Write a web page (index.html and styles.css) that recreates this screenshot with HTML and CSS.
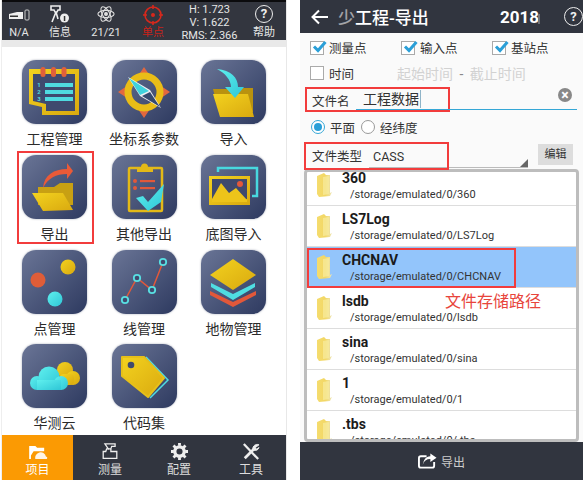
FILE: index.html
```html
<!DOCTYPE html>
<html lang="en">
<head>
<meta charset="UTF-8">
<meta name="viewport" content="width=device-width, initial-scale=1.0">
<title>工程-导出</title>
<link rel="stylesheet" href="styles.css">
</head>
<body>
<svg class="defs" width="0" height="0">
    <defs>
        <linearGradient id="gold" x1="0" y1="0" x2="1" y2="1"><stop offset="0" stop-color="#f3d21f"/><stop offset="1" stop-color="#d9a90f"/></linearGradient>
        <linearGradient id="cyan" x1="0" y1="0" x2="1" y2="1"><stop offset="0" stop-color="#5ff0ee"/><stop offset="1" stop-color="#2fc6d6"/></linearGradient>
        <linearGradient id="folder" x1="0" y1="0" x2="1" y2="0"><stop offset="0" stop-color="#f5dc6e"/><stop offset="0.55" stop-color="#f2d765"/><stop offset="1" stop-color="#eee6b8"/></linearGradient>
        <symbol id="small-folder" viewBox="0 0 18 26">
            <path d="M2 4 L9 1 L11 3 L15 3 L15 21 L17 20 L15 24 L4 25 L2 22 Z" fill="url(#folder)"/>
            <path d="M8 5 L14 4 L14 22 L8 23 Z" fill="#f8ec9f" opacity="0.7"/>
        </symbol>
    </defs>
</svg>

<div class="phone phone-left">
    <div class="status-bar">
        <div class="status-item">
            <svg class="status-icon" width="22" height="14" viewBox="0 0 22 14"><path d="M1 5 L9 3 L15 3 L15 10 L1 10 Z" fill="#eee"/><rect x="17" y="1" width="4" height="10" rx="1" fill="none" stroke="#ccc"/><rect x="2" y="6.5" width="8" height="1.5" fill="#333"/></svg>
            <span>N/A</span>
        </div>
        <div class="status-item">
            <svg class="status-icon" width="20" height="18" viewBox="0 0 20 18"><path d="M1 1 H10 V5 H8 L7 7 H5 L4 5 H1 Z" fill="none" stroke="#eee" stroke-width="1.6"/><path d="M6 7 L2 17 M6 7 L8 14" stroke="#eee" stroke-width="1.6"/><circle cx="14.5" cy="13" r="4.5" fill="#eee"/><rect x="13.8" y="11" width="1.5" height="5" fill="#333"/></svg>
            <span>信息</span>
        </div>
        <div class="status-item">
            <svg class="status-icon" width="18" height="18" viewBox="0 0 20 20" fill="none" stroke="#ddd" stroke-width="1.2"><ellipse cx="10" cy="10" rx="9" ry="4"/><ellipse cx="10" cy="10" rx="9" ry="4" transform="rotate(60 10 10)"/><ellipse cx="10" cy="10" rx="9" ry="4" transform="rotate(120 10 10)"/><circle cx="10" cy="10" r="1.6" fill="#ddd"/></svg>
            <span>21/21</span>
        </div>
        <div class="status-item status-red">
            <svg class="status-icon" width="20" height="20" viewBox="0 0 20 20" fill="none" stroke="#d8281c" stroke-width="1.6"><circle cx="10" cy="10" r="8"/><circle cx="10" cy="10" r="1.2" fill="#d8281c"/><path d="M10 0 V4 M10 16 V20 M0 10 H4 M16 10 H20"/></svg>
            <span>单点</span>
        </div>
        <div class="status-values">
            <span>H: 1.723</span>
            <span>V: 1.622</span>
            <span>RMS: 2.366</span>
        </div>
        <div class="status-item status-help">
            <div class="help-ring">?</div>
            <span>帮助</span>
        </div>
    </div>
    <div class="status-shade"></div>

    <div class="menu-grid">
        <div class="menu-item">
            <div class="tile">
                <svg width="65" height="64" viewBox="0 0 65 64">
                    <path d="M7 9 H57 V55 H20 V47 L7 44 Z" fill="url(#gold)"/>
                    <path d="M11 14 H53 V51 H24 V44 L11 41 Z" fill="#3f4a6e"/>
                    <rect x="18.5" y="7" width="5" height="10" rx="2.5" fill="#e0603a"/>
                    <rect x="29" y="7" width="5" height="10" rx="2.5" fill="#e0603a"/>
                    <rect x="39.5" y="7" width="5" height="10" rx="2.5" fill="#e0603a"/>
                    <rect x="23" y="23" width="28" height="4" fill="#4fdbe0"/>
                    <rect x="23" y="30" width="28" height="4" fill="#4fdbe0"/>
                    <rect x="23" y="37" width="28" height="4" fill="#4fdbe0"/>
                    <text x="17" y="27" class="tile-num">1</text>
                    <text x="17" y="34" class="tile-num">2</text>
                    <text x="17" y="41" class="tile-num">3</text>
                </svg>
            </div>
            <div class="menu-label">工程管理</div>
        </div>
        <div class="menu-item">
            <div class="tile">
                <svg width="65" height="64" viewBox="0 0 65 64">
                    <path d="M32 7 L40 19 H24 Z M58 32 L46 40 V24 Z M32 58 L24 46 H40 Z M6 32 L18 24 V40 Z" fill="#e2683f"/>
                    <circle cx="32" cy="32" r="16" fill="none" stroke="#e9bd17" stroke-width="7"/>
                    <path d="M16 17 L38 30 L49 48 L28 36 Z" fill="#fff" opacity="0.9"/>
                    <path d="M17 18 L37 31 L28 35 Z" fill="#3fd2dd"/>
                    <path d="M30 36 L38 32 L48 47 Z" fill="#35496f"/>
                </svg>
            </div>
            <div class="menu-label">坐标系参数</div>
        </div>
        <div class="menu-item">
            <div class="tile">
                <svg width="65" height="64" viewBox="0 0 65 64">
                    <path d="M12 29 H39 L41 28 H52 V52 H18 Z" fill="#b9920f"/>
                    <path d="M12 34 H47 L53 57 H19 Z" fill="url(#gold)"/>
                    <path d="M16 9 C30 10 37 18 37 27 L43 27 L34 38 L24 27 L30 27 C30 20 24 13 16 9 Z" fill="url(#cyan)"/>
                </svg>
            </div>
            <div class="menu-label">导入</div>
        </div>

        <div class="menu-item marked">
            <div class="tile">
                <svg width="65" height="64" viewBox="0 0 65 64">
                    <path d="M16 32 H32 L38 28 H51 V50 H16 Z" fill="#c8a013"/>
                    <path d="M10 38 H41 L51 55 L21 56 Z" fill="url(#gold)"/>
                    <path d="M21 33 C22 20 32 14 45 14 L45 8 L51 16 L45 24 L45 19 C34 19 26 23 21 33 Z" fill="#ea5a38"/>
                </svg>
            </div>
            <div class="menu-label">导出</div>
        </div>
        <div class="menu-item">
            <div class="tile">
                <svg width="65" height="64" viewBox="0 0 65 64">
                    <rect x="17" y="13" width="33" height="43" rx="1" fill="none" stroke="#e3b917" stroke-width="2.5"/>
                    <path d="M25 12 H29 A3.5 3.5 0 0 1 36 12 H41 V17 H25 Z" fill="#e3b917"/>
                    <circle cx="23" cy="26" r="2" fill="#e2583a"/>
                    <rect x="28" y="25" width="15" height="2.2" fill="#e2583a"/>
                    <circle cx="23" cy="33" r="2" fill="#e2583a"/>
                    <rect x="28" y="32" width="15" height="2.2" fill="#e2583a"/>
                    <path d="M24 43 L31 41 L36 47 L52 29 L49 47 L36 56 Z" fill="url(#cyan)"/>
                </svg>
            </div>
            <div class="menu-label">其他导出</div>
        </div>
        <div class="menu-item">
            <div class="tile">
                <svg width="65" height="64" viewBox="0 0 65 64">
                    <path d="M17 17 V13 H56 V41 H51" fill="none" stroke="#48d8df" stroke-width="2.5"/>
                    <rect x="8" y="21" width="41" height="29" fill="url(#gold)"/>
                    <rect x="11" y="24" width="35" height="20" fill="#3f4a6e"/>
                    <path d="M11 44 L20 28 L28 38 L35 33 L46 45 V47 H11 Z" fill="#edc41a"/>
                    <circle cx="39" cy="29" r="3" fill="#e2583a"/>
                </svg>
            </div>
            <div class="menu-label">底图导入</div>
        </div>

        <div class="menu-item">
            <div class="tile">
                <svg width="65" height="64" viewBox="0 0 65 64">
                    <circle cx="46" cy="17" r="7.5" fill="url(#gold)"/>
                    <circle cx="16" cy="30" r="7.5" fill="#df5d38"/>
                    <circle cx="33" cy="49" r="7.5" fill="url(#cyan)"/>
                </svg>
            </div>
            <div class="menu-label">点管理</div>
        </div>
        <div class="menu-item">
            <div class="tile">
                <svg width="65" height="64" viewBox="0 0 65 64">
                    <path d="M13 50 L25 28 L40 40 L51 12" fill="none" stroke="#e2583a" stroke-width="1.5"/>
                    <g fill="#3f4a6e" stroke="#58dfe2" stroke-width="1.8"><circle cx="13" cy="50" r="3.2"/><circle cx="25" cy="28" r="3.2"/><circle cx="40" cy="40" r="3.2"/><circle cx="51" cy="12" r="3.2"/></g>
                </svg>
            </div>
            <div class="menu-label">线管理</div>
        </div>
        <div class="menu-item">
            <div class="tile">
                <svg width="65" height="64" viewBox="0 0 65 64">
                    <path d="M9 41 L32 52 L55 41 L55 45 L32 57 L9 45 Z" fill="#e2583a"/>
                    <path d="M10 33 L32 44 L54 33 L54 37 L32 50 L10 37 Z" fill="#4fdde2"/>
                    <path d="M32 9 L55 25 L32 40 L9 25 Z" fill="url(#gold)"/>
                </svg>
            </div>
            <div class="menu-label">地物管理</div>
        </div>

        <div class="menu-item">
            <div class="tile">
                <svg width="65" height="64" viewBox="0 0 65 64">
                    <g fill="url(#gold)"><circle cx="43" cy="26" r="8"/><circle cx="51" cy="34" r="7"/><rect x="38" y="30" width="14" height="11" rx="4"/></g>
                    <g fill="url(#cyan)"><circle cx="15" cy="39" r="7"/><circle cx="27" cy="33" r="10.5"/><circle cx="39" cy="39" r="7"/><rect x="15" y="36" width="24" height="10"/></g>
                </svg>
            </div>
            <div class="menu-label">华测云</div>
        </div>
        <div class="menu-item">
            <div class="tile">
                <svg width="65" height="64" viewBox="0 0 65 64">
                    <path d="M34 13 L56 36 L38 54" fill="none" stroke="#4fdde2" stroke-width="1.5"/>
                    <path d="M10 13 H32 L52 34 L36 53 L10 32 Z" fill="url(#gold)" stroke="#e6c019" stroke-width="2" stroke-linejoin="round"/>
                    <circle cx="19" cy="21" r="3.3" fill="#3f4a6e"/>
                </svg>
            </div>
            <div class="menu-label">代码集</div>
        </div>
    </div>

    <div class="bottom-nav">
        <div class="nav-item nav-active">
            <svg width="20" height="15" viewBox="0 0 22 17"><path d="M1 1 H8 L10 3 H18 V7 H6 L3 12 V16 H1 Z" fill="#fff"/><path d="M8 16 A6 6 0 0 1 20 13 A2 2 0 0 1 21 16 Z" fill="#fff" opacity="0.9"/></svg>
            <span>项目</span>
        </div>
        <div class="nav-item">
            <svg width="18" height="17" viewBox="0 0 20 20" fill="none" stroke="#eee" stroke-width="1.5"><path d="M4 1 H16 V4 H12 L11 7 H8 Z"/><path d="M9 7 H6 L5 10 H2 V18 H18 V10 H11 V7"/></svg>
            <span>测量</span>
        </div>
        <div class="nav-item">
            <svg width="17" height="17" viewBox="0 0 18 18"><circle cx="9" cy="9" r="5" fill="none" stroke="#eee" stroke-width="3.5"/><path d="M7.5 0 H10.5 V3 H7.5 Z M7.5 15 H10.5 V18 H7.5 Z M0 7.5 H3 V10.5 H0 Z M15 7.5 H18 V10.5 H15 Z" fill="#eee"/><path d="M7.5 0 H10.5 V3 H7.5 Z M7.5 15 H10.5 V18 H7.5 Z M0 7.5 H3 V10.5 H0 Z M15 7.5 H18 V10.5 H15 Z" fill="#eee" transform="rotate(45 9 9)"/></svg>
            <span>配置</span>
        </div>
        <div class="nav-item">
            <svg width="18" height="17" viewBox="0 0 20 19" fill="none" stroke="#eee"><path d="M2 1 L18 18" stroke-width="2.5"/><path d="M3 17 L13 7" stroke-width="3"/><path d="M12 7 A5 5 0 0 1 19 2 L15 5 L16 7 L19 5 A5 5 0 0 1 13 8" fill="#eee" stroke-width="1"/></svg>
            <span>工具</span>
        </div>
    </div>
</div>

<div class="phone phone-right">
    <div class="title-bar">
        <svg class="back-arrow" width="18" height="16" viewBox="0 0 18 16" fill="none" stroke="#fff" stroke-width="2"><path d="M17 8 H2 M8 1.5 L1.5 8 L8 14.5"/></svg>
        <div class="title-text"><span class="title-fade">少</span>工程-导出</div>
        <div class="title-date">2018</div>
        <div class="help-ring help-title">?</div>
    </div>

    <div class="check-row">
        <label class="check-item"><span class="box box-on"><svg width="15" height="13" viewBox="0 0 15 13" fill="none" stroke="#2a9fd8" stroke-width="3"><path d="M2 6.5 L6 10.5 L13.5 2"/></svg></span>测量点</label>
        <label class="check-item"><span class="box box-on"><svg width="15" height="13" viewBox="0 0 15 13" fill="none" stroke="#2a9fd8" stroke-width="3"><path d="M2 6.5 L6 10.5 L13.5 2"/></svg></span>输入点</label>
        <label class="check-item"><span class="box box-on"><svg width="15" height="13" viewBox="0 0 15 13" fill="none" stroke="#2a9fd8" stroke-width="3"><path d="M2 6.5 L6 10.5 L13.5 2"/></svg></span>基站点</label>
    </div>

    <div class="time-row">
        <label class="check-item time-check"><span class="box"></span>时间</label>
        <div class="time-range">起始时间 <span class="time-dash">-</span> 截止时间</div>
    </div>

    <div class="name-row">
        <div class="field-label name-label">文件名</div>
        <div class="name-input">工程数据</div>
        <div class="clear-btn">×</div>
        <div class="red-box name-box"></div>
    </div>

    <div class="radio-row">
        <span class="radio radio-on"></span><span class="radio-text">平面</span>
        <span class="radio"></span><span>经纬度</span>
    </div>

    <div class="type-row">
        <div class="field-label">文件类型</div>
        <div class="type-select">CASS</div>
        <div class="edit-btn">编辑</div>
        <div class="red-box type-box"></div>
    </div>

    <div class="file-list">
        <div class="file-rows">
            <div class="file-row">
                <svg class="file-folder" width="18" height="26"><use href="#small-folder"/></svg>
                <div class="file-text"><div class="file-name">360</div><div class="file-path">/storage/emulated/0/360</div></div>
            </div>
            <div class="file-row">
                <svg class="file-folder" width="18" height="26"><use href="#small-folder"/></svg>
                <div class="file-text"><div class="file-name">LS7Log</div><div class="file-path">/storage/emulated/0/LS7Log</div></div>
            </div>
            <div class="file-row file-selected">
                <svg class="file-folder" width="18" height="26"><use href="#small-folder"/></svg>
                <div class="file-text"><div class="file-name">CHCNAV</div><div class="file-path">/storage/emulated/0/CHCNAV</div></div>
                <div class="red-box chcnav-box"></div>
            </div>
            <div class="file-row">
                <svg class="file-folder" width="18" height="26"><use href="#small-folder"/></svg>
                <div class="file-text"><div class="file-name">lsdb</div><div class="file-path">/storage/emulated/0/lsdb</div></div>
                <div class="path-note">文件存储路径</div>
            </div>
            <div class="file-row">
                <svg class="file-folder" width="18" height="26"><use href="#small-folder"/></svg>
                <div class="file-text"><div class="file-name">sina</div><div class="file-path">/storage/emulated/0/sina</div></div>
            </div>
            <div class="file-row">
                <svg class="file-folder" width="18" height="26"><use href="#small-folder"/></svg>
                <div class="file-text"><div class="file-name">1</div><div class="file-path">/storage/emulated/0/1</div></div>
            </div>
            <div class="file-row">
                <svg class="file-folder" width="18" height="26"><use href="#small-folder"/></svg>
                <div class="file-text"><div class="file-name">.tbs</div><div class="file-path">/storage/emulated/0/.tbs</div></div>
            </div>
        </div>
    </div>

    <div class="export-bar">
        <svg width="19" height="16" viewBox="0 0 20 16" fill="none" stroke="#fff" stroke-width="2"><path d="M9 3 H3 Q1 3 1 5 V13 Q1 15 3 15 H15 Q17 15 17 13 V9"/><path d="M5 12 C6 8 9 6 13 6 V9 L19.5 4.5 L13 0 V3 C8 3 6 7 5 12 Z" fill="#fff" stroke="none"/></svg>
        <span>导出</span>
    </div>
</div>
</body>
</html>
```

FILE: styles.css
```css
html, body {
    margin: 0;
    padding: 0;
    background-color: white;
}

body {
    display: flex;
    align-items: flex-start;
    width: 584px;
    height: 485px;
    overflow: hidden;
    font-family: "Roboto", "Noto Sans CJK SC", sans-serif;
}

.defs {
    position: absolute;
}

.phone {
    height: 480px;
    display: flex;
    flex-direction: column;
    flex-shrink: 0;
}

.phone-left {
    width: 286px;
    margin-left: 1px;
    border-left: 1px solid #eee;
    border-right: 1px solid #e8e8e8;
    box-sizing: border-box;
}

.phone-right {
    width: 283px;
    margin-left: 13px;
    background-color: #fafafa;
}

/* left screen */
.status-bar {
    height: 40px;
    box-sizing: border-box;
    background-color: #33363f;
    border-top: 2px solid #0b0b0d;
    display: flex;
    color: #e6e6e6;
    font-size: 11px;
}

.status-item {
    display: flex;
    flex-direction: column;
    align-items: center;
    justify-content: space-between;
    height: 38px;
    padding: 3px 0 0;
    box-sizing: border-box;
    line-height: 14px;
}

.status-item:nth-child(1) {
    width: 30px;
    margin-left: 2px;
    padding-top: 7px;
}

.status-item:nth-child(2) {
    width: 52px;
}

.status-item:nth-child(3) {
    width: 40px;
}

.status-item:nth-child(4) {
    width: 54px;
}

.status-icon {
    display: block;
}

.status-red {
    color: #c9231a;
}

.status-values {
    width: 59px;
    line-height: 13px;
    text-align: center;
    white-space: nowrap;
    display: flex;
    flex-direction: column;
    padding-top: 1px;
}

.status-item.status-help {
    width: 40px;
    margin-left: 5px;
}

.help-ring {
    width: 16px;
    height: 16px;
    border: 1px solid #eee;
    border-radius: 50%;
    text-align: center;
    font-size: 13px;
    font-weight: bold;
    line-height: 16px;
    color: #eee;
}

.status-shade {
    height: 7px;
    background-color: #e9e9e9;
}

.menu-grid {
    flex: 1;
    display: grid;
    grid-template-columns: repeat(3, 89.5px);
    grid-auto-rows: 94.8px;
    padding: 13px 0 0 20px;
    background-color: white;
    overflow: hidden;
}

.menu-item {
    position: relative;
    width: 65px;
}

.marked::after {
    content: "";
    position: absolute;
    left: -5px;
    top: -4px;
    width: 77px;
    height: 93px;
    box-sizing: border-box;
    border: 2px solid #f23c3c;
}

.tile {
    width: 65px;
    height: 64px;
    border-radius: 14px;
    background: linear-gradient(135deg, #6a7596, #2e3a60);
    box-shadow: 0 0 2px rgba(60, 70, 100, 0.5);
}

.tile svg {
    display: block;
}

.tile-num {
    font-size: 6px;
    font-weight: bold;
    fill: #4fdbe0;
    text-anchor: middle;
}

.menu-label {
    width: 100px;
    margin-left: -17.5px;
    margin-top: 6px;
    text-align: center;
    font-size: 14px;
    line-height: 18px;
    color: #2b2b2b;
}

.bottom-nav {
    height: 45px;
    background-color: #31353f;
    display: flex;
    color: #ddd;
    font-size: 12px;
}

.nav-item {
    width: 64px;
    display: flex;
    flex-direction: column;
    align-items: center;
    justify-content: flex-end;
    gap: 2px;
    line-height: 16px;
    padding-bottom: 2px;
    box-sizing: border-box;
}

.nav-item:nth-child(2) {
    width: 74px;
}

.nav-item:nth-child(4) {
    width: 70px;
    margin-left: 5px;
}

.nav-item.nav-active {
    width: 71px;
    background-color: #fb9a03;
    color: white;
}

/* right screen */
.title-bar {
    height: 33px;
    background-color: #31353f;
    display: flex;
    align-items: center;
    color: white;
}

.back-arrow {
    margin-left: 11px;
}

.title-text {
    margin-left: 9px;
    width: 162px;
    font-size: 17px;
    font-weight: 500;
}

.title-fade {
    opacity: 0.55;
}

.title-date {
    position: relative;
    font-size: 17px;
    font-weight: bold;
    width: 55px;
    margin-right: 9px;
}

.title-date::after {
    content: "";
    position: absolute;
    left: 38px;
    top: 7px;
    width: 2px;
    height: 10px;
    background-color: #6e7178;
}

.help-title {
    width: 17px;
    height: 17px;
    line-height: 17px;
}

.check-row {
    height: 27px;
    margin-top: 1px;
    padding-left: 10px;
    display: flex;
    align-items: center;
    font-size: 12.5px;
    color: #333;
}

.check-item {
    display: flex;
    align-items: center;
    gap: 5px;
    width: 92px;
}

.box {
    position: relative;
    display: block;
    width: 12px;
    height: 12px;
    border: 1px solid #aaa;
    background-color: white;
    flex-shrink: 0;
}

.box svg {
    position: absolute;
    left: 1px;
    top: -2px;
}

.time-row {
    height: 24px;
    padding-left: 10px;
    display: flex;
    align-items: center;
    font-size: 12.5px;
    color: #333;
}

.time-check {
    width: 87px;
}

.time-range {
    font-size: 14px;
    color: #d2d2d2;
}

.time-dash {
    color: #888;
    margin: 0 3px;
}

.name-row {
    position: relative;
    height: 27px;
    display: flex;
    align-items: center;
    padding-left: 12px;
}

.field-label {
    font-size: 12.5px;
    color: #333;
}

.name-label {
    width: 51px;
    margin-top: 3px;
}

.name-input {
    font-size: 14px;
    color: #333;
    line-height: 18px;
    padding-right: 1px;
    border-right: 1px solid #8fb4c8;
}

.name-row::after {
    content: "";
    position: absolute;
    left: 56px;
    top: 24px;
    width: 221px;
    height: 1px;
    background-color: #35a7d6;
}

.clear-btn {
    position: absolute;
    left: 258px;
    top: 3px;
    width: 14px;
    height: 14px;
    border-radius: 50%;
    background-color: #888;
    color: white;
    font-size: 14px;
    font-weight: bold;
    line-height: 14px;
    text-align: center;
}

.red-box {
    position: absolute;
    border: 2px solid #f23c3c;
    box-sizing: border-box;
}

.name-box {
    left: 5px;
    top: 2px;
    width: 145px;
    height: 25px;
}

.radio-row {
    height: 30px;
    padding-left: 11px;
    display: flex;
    align-items: center;
    font-size: 12.5px;
    color: #333;
}

.radio {
    position: relative;
    display: block;
    width: 12px;
    height: 12px;
    border: 1px solid #999;
    border-radius: 50%;
    margin-right: 5px;
    background-color: white;
}

.radio-on {
    border-color: #35a7d6;
}

.radio-on::after {
    content: "";
    position: absolute;
    left: 2px;
    top: 2px;
    width: 8px;
    height: 8px;
    border-radius: 50%;
    background-color: #2a9fd8;
}

.radio-text {
    margin-right: 6px;
}

.type-row {
    position: relative;
    height: 27px;
    display: flex;
    align-items: center;
    padding-left: 12px;
}

.type-select {
    position: relative;
    width: 155px;
    margin-left: 7px;
    padding-left: 4px;
    font-size: 12.5px;
    line-height: 21px;
    color: #333;
    border-bottom: 1px solid #bbb;
    margin-top: 2px;
}

.type-select::after {
    content: "";
    position: absolute;
    right: 0;
    bottom: 0;
    border-left: 8px solid transparent;
    border-bottom: 8px solid #666;
}

.edit-btn {
    width: 35px;
    height: 21px;
    margin-left: 10px;
    margin-top: -2px;
    background-color: #ddd;
    color: #333;
    text-align: center;
    font-size: 11px;
    line-height: 21px;
}

.type-box {
    left: 4px;
    top: 0;
    width: 145px;
    height: 28px;
}

.file-list {
    width: 275px;
    height: 273px;
    margin-left: 4px;
    border: 3px solid #bdbdbd;
    border-radius: 4px;
    box-sizing: border-box;
    overflow: hidden;
    background-color: white;
}

.file-rows {
    margin-top: -7px;
}

.file-row {
    position: relative;
    height: 41px;
    box-sizing: border-box;
    border-bottom: 1px solid #ddd;
    display: flex;
    align-items: center;
}

.file-selected {
    background-color: #93c5fb;
}

.file-folder {
    margin-left: 8px;
    flex-shrink: 0;
}

.file-text {
    margin-left: 9px;
    padding-top: 3px;
}

.file-name {
    font-size: 14px;
    font-weight: bold;
    line-height: 17px;
    color: #1b1b1b;
}

.file-path {
    font-size: 11px;
    line-height: 16px;
    padding-left: 8px;
    color: #333;
}

.chcnav-box {
    left: 0;
    top: 1px;
    width: 209px;
    height: 40px;
}

.path-note {
    position: absolute;
    left: 138px;
    top: 5px;
    font-size: 16px;
    line-height: 18px;
    color: #e8453c;
}

.export-bar {
    height: 38px;
    background-color: #31353f;
    color: #ccc;
    font-size: 12px;
    display: flex;
    align-items: center;
    justify-content: center;
    gap: 4px;
}
```
